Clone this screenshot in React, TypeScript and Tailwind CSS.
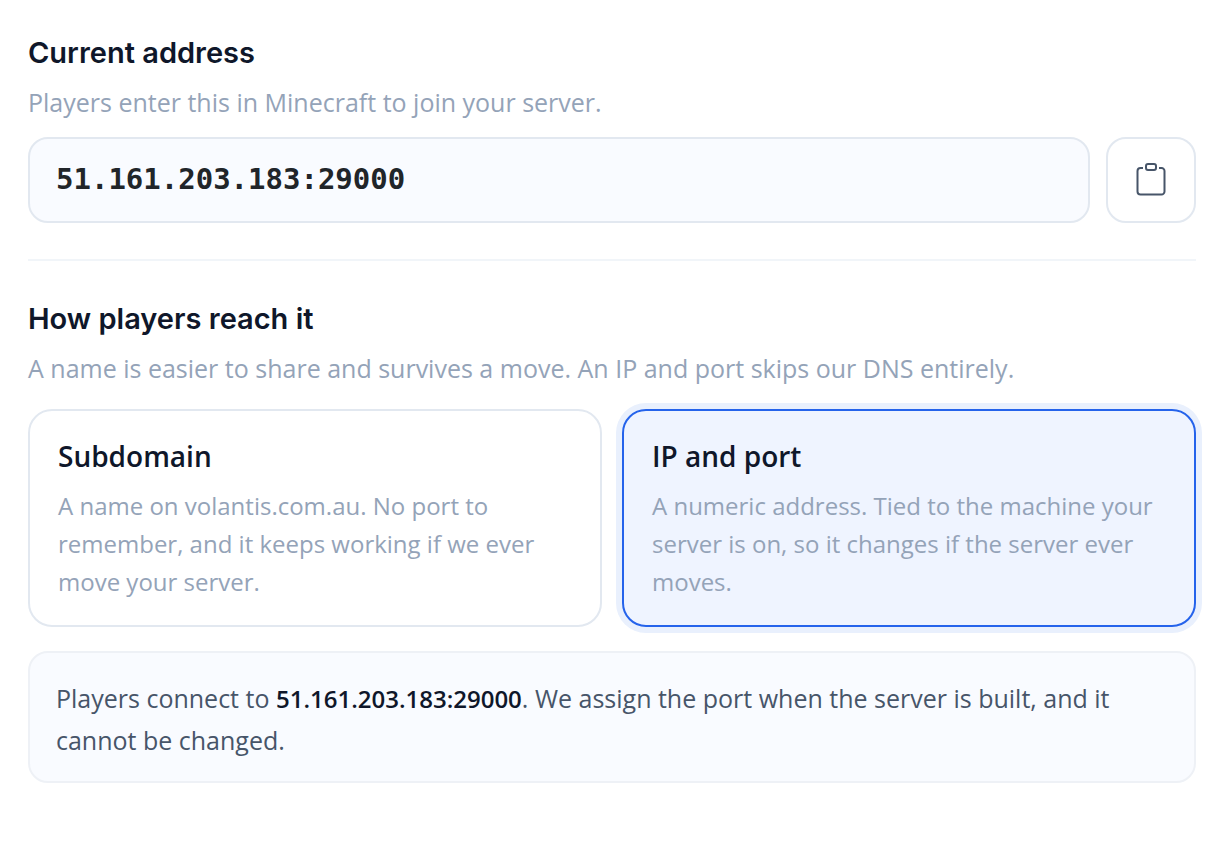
import { useState } from "react";

const ADDRESS = "51.161.203.183:29000";

const OPTIONS = [
  {
    id: "subdomain",
    title: "Subdomain",
    text: "A name on volantis.com.au. No port to remember, and it keeps working if we ever move your server.",
  },
  {
    id: "ip",
    title: "IP and port",
    text: "A numeric address. Tied to the machine your server is on, so it changes if the server ever moves.",
  },
];

export default function App() {
  const [mode, setMode] = useState("ip");
  return (
    <main className="min-h-screen bg-white px-7 pt-8 pb-16 font-['Open_Sans','Noto_Sans',sans-serif] text-[25px] text-[#94a3b8]">
      <section>
        <h2 className="font-['Inter',sans-serif] text-[29px] leading-[42px] font-semibold text-[#0f172a]">Current address</h2>
        <p className="mt-2 leading-[40px]">Players enter this in Minecraft to join your server.</p>
        <div className="mt-[15px] flex gap-4">
          <code className="flex h-[86px] min-w-0 flex-1 items-center rounded-[20px] border-2 border-[#e2e8f0] bg-[#f9fbff] px-[26px] font-['DejaVu_Sans_Mono',monospace] text-[29px] font-bold text-[#212529]">
            {ADDRESS}
          </code>
          <button
            type="button"
            aria-label="Copy address"
            onClick={() => navigator.clipboard?.writeText(ADDRESS)}
            className="flex h-[86px] w-[90px] shrink-0 items-center justify-center rounded-[20px] border-2 border-[#e2e8f0] bg-white text-[#475569]"
          >
            <svg viewBox="0 0 32 34" className="h-[34px] w-8" fill="none" stroke="currentColor" strokeWidth="2" aria-hidden="true">
              <path d="M8 5H5.500A3 3 0 0 0 2.500 8V28.500A3 3 0 0 0 5.500 31.500H26.500A3 3 0 0 0 29.500 28.500V8A3 3 0 0 0 26.500 5H24" />
              <rect x="11" y="1" width="10" height="6" rx="2" />
            </svg>
          </button>
        </div>
      </section>
      <section className="mt-9 border-t-2 border-[#f1f5f9] pt-[37px]">
        <h2 className="font-['Inter',sans-serif] text-[29px] leading-[42px] font-semibold text-[#0f172a]">How players reach it</h2>
        <p className="mt-2 leading-[40px]">A name is easier to share and survives a move. An IP and port skips our DNS entirely.</p>
        <div className="mt-[21px] grid grid-cols-2 gap-5">
          {OPTIONS.map((o) => (
            <button
              key={o.id}
              type="button"
              aria-pressed={mode === o.id}
              onClick={() => setMode(o.id)}
              className={
                "flex flex-col rounded-[24px] border-2 px-7 py-6 text-left " +
                (mode === o.id
                  ? "border-[#2563eb] bg-[#eff4ff] ring-6 ring-[#e9f0fd]"
                  : "border-[#e2e8f0] bg-white")
              }
            >
              <span className="text-[28px] leading-[42px] font-semibold text-[#0f172a]">{o.title}</span>
              <span className="mt-[10px] text-[24px] leading-[38px]">{o.text}</span>
            </button>
          ))}
        </div>
        <p className="mt-6 rounded-[20px] border-2 border-[#eef1f6] bg-[#f9fbff] px-[26px] pt-6 pb-5 leading-[42px] text-[#475569]">
          Players connect to <strong className="text-[24px] leading-none font-semibold text-[#0f172a]">{ADDRESS}</strong>. We assign the port when the server is built, and it cannot be changed.
        </p>
      </section>
    </main>
  );
}
